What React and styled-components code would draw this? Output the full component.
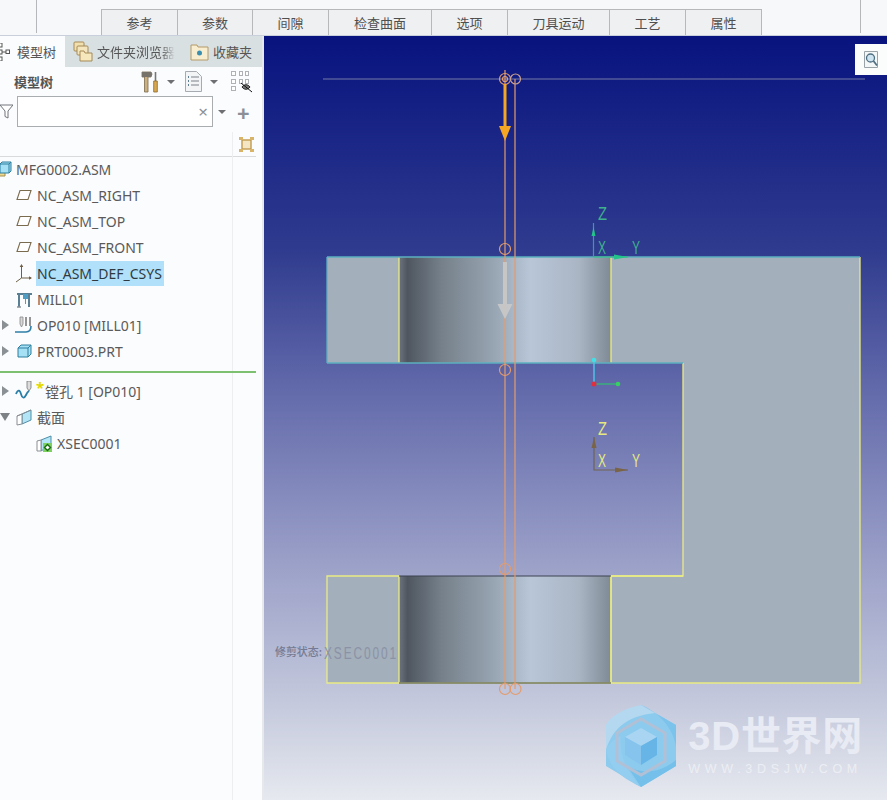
import styled, { createGlobalStyle } from 'styled-components';

const GlobalStyle = createGlobalStyle`
  html, body, #root {
    margin: 0;
    height: 100%;
  }
  body {
    overflow: hidden;
    background: #f7f8fa;
    font-family: "Noto Sans", "Noto Sans CJK SC", sans-serif;
  }
`;

const stepTabs = [
  { label: '参考', width: 77 },
  { label: '参数', width: 76 },
  { label: '间隙', width: 77 },
  { label: '检查曲面', width: 104 },
  { label: '选项', width: 77 },
  { label: '刀具运动', width: 103 },
  { label: '工艺', width: 77 },
  { label: '属性', width: 77 },
];

/* ---------- small drawn icons ---------- */

const TreeTabIcon = () => (
  <svg width="11" height="18" viewBox="0 0 11 18">
    <rect x="-3" y="0" width="5" height="4" fill="#fff" stroke="#555" />
    <rect x="-3" y="7" width="5" height="4" fill="#fff" stroke="#555" />
    <rect x="-3" y="14" width="5" height="4" fill="#fff" stroke="#555" />
    <rect x="6" y="7" width="3.5" height="3.5" fill="#fff" stroke="#555" />
    <path d="M2 9h4" stroke="#555" />
  </svg>
);

const FolderIcon = ({ stacked }) => (
  <svg width="21" height="21" viewBox="0 0 21 21">
    {stacked && <rect x="1" y="1" width="10" height="9" rx="1" fill="#f2dfae" stroke="#a58a58" />}
    {stacked && <rect x="4" y="5" width="11" height="9" rx="1" fill="#f5e5bc" stroke="#a58a58" />}
    <path d="M7 10h4l1 2h7v8H7z" fill={stacked ? '#f7e7bd' : 'none'} stroke={stacked ? '#a58a58' : 'none'} />
    {!stacked && <path d="M2 4h6l1 2h10v13H2z" fill="#f8edcf" stroke="#b49a68" />}
    {!stacked && <circle cx="10.5" cy="12" r="2.5" fill="#3a8fb0" />}
  </svg>
);

const ToolsIcon = () => (
  <svg width="18" height="22" viewBox="0 0 18 22">
    <path d="M1 1h9l1 2-1 3H7v15H3.5V6H1z" fill="#cdb07f" stroke="#7b6a4a" strokeWidth=".8" />
    <path d="M1 1h9l1 2-1 3H1z" fill="#77736a" />
    <path d="M14.5 1v9" stroke="#777" strokeWidth="1.6" />
    <path d="M12.7 10h3.6v11h-3.6z" fill="#d9a850" stroke="#8a6a30" strokeWidth=".8" />
  </svg>
);

const ListIcon = () => (
  <svg width="17" height="21" viewBox="0 0 17 21">
    <path d="M.5.5h11l5 5v15H.5z" fill="#f2f4f6" stroke="#a5abb0" />
    <path d="M6 6h8M6 10h8M6 14h8" stroke="#7c8288" />
    <path d="M3 6h1M3 10h1M3 14h1" stroke="#5f7f8f" strokeWidth="2" />
  </svg>
);

const ShowTreeIcon = () => (
  <svg width="22" height="22" viewBox="0 0 22 22">
    <g fill="#fff" stroke="#aeb2b6">
      <rect x=".5" y=".5" width="4" height="4" />
      <rect x=".5" y="8.5" width="4" height="4" />
      <rect x=".5" y="15.5" width="4" height="4" />
      <rect x="8.5" y=".5" width="3" height="4" />
      <rect x="14.5" y=".5" width="3" height="4" />
      <rect x="8.5" y="8.5" width="3" height="4" />
      <rect x="14.5" y="8.5" width="3" height="4" />
    </g>
    <path d="M11 16c2-3 6-3 8 0-2 3-6 3-8 0z" fill="#777" stroke="#222" />
    <path d="M10 12l11 9" stroke="#111" />
  </svg>
);

const FunnelIcon = () => (
  <svg width="13" height="15" viewBox="0 0 13 15">
    <path d="M0 1h13L8 7v7L5 12.5V7z" fill="#fff" stroke="#70757a" />
  </svg>
);

const FitIcon = () => (
  <svg width="15" height="15" viewBox="0 0 15 15">
    <rect x="3" y="3" width="9" height="9" fill="#f4e6c4" stroke="#c09a50" strokeWidth="1.4" />
    <g fill="#d9b468">
      <rect x="0" y="0" width="4" height="3" />
      <rect x="11" y="0" width="4" height="3" />
      <rect x="0" y="12" width="4" height="3" />
      <rect x="11" y="12" width="4" height="3" />
    </g>
  </svg>
);

const AssemblyIcon = () => (
  <svg width="18" height="16" viewBox="0 0 18 16">
    <path d="M2 9h9v6H2z" fill="#efd98e" stroke="#a58f50" />
    <path d="M6 3l2-2h9v9l-2 2H6z" fill="#a5e0f5" stroke="#2f7f9f" />
    <path d="M6 3h9v9M15 3l2-2" stroke="#2f7f9f" fill="none" />
  </svg>
);

const PlaneIcon = () => (
  <svg width="16" height="12" viewBox="0 0 16 12">
    <path d="M4 1.500h11L12 10.500H1z" fill="#fff" stroke="#7a6a4e" strokeWidth="1.100" />
  </svg>
);

const CsysIcon = () => (
  <svg width="18" height="20" viewBox="0 0 18 20">
    <path d="M6.500 2v13M6.500 15L16 15M6.500 15L1 19" stroke="#6e5f46" fill="none" />
    <path d="M4.700 4l1.800-3 1.800 3zM14 13.200l3 1.800-3 1.800z" fill="#6e5f46" />
  </svg>
);

const MillIcon = () => (
  <svg width="17" height="17" viewBox="0 0 17 17">
    <path d="M1 3h15M3 3v13M13 3v13" stroke="#5a7f95" strokeWidth="2" fill="none" />
    <path d="M7 3h5v5H10v5H9V8H7z" fill="#4f9cc4" />
    <path d="M1 16h4" stroke="#8a9097" strokeWidth="1.500" />
  </svg>
);

const OperationIcon = () => (
  <svg width="18" height="18" viewBox="0 0 18 18">
    <path d="M5 1h3v7L6.500 11 5 8z" fill="#d8d8d8" stroke="#888" strokeWidth=".8" />
    <path d="M11 1v9M15 1v9" stroke="#6a6a6a" strokeWidth="1.400" />
    <path d="M0 16h11c3 0 5-2 5-6" stroke="#2f7fa8" strokeWidth="1.600" fill="none" />
  </svg>
);

const PartIcon = () => (
  <svg width="15" height="14" viewBox="0 0 15 14">
    <path d="M1 4l3-3h10v9l-3 3H1z" fill="#a5e0f5" stroke="#2f7f9f" />
    <path d="M1 4h10v9M11 4l3-3" stroke="#2f7f9f" fill="none" />
  </svg>
);

const BoreIcon = () => (
  <svg width="19" height="20" viewBox="0 0 19 20">
    <path d="M12 0h4v7l-2 3-2-3z" fill="#dcdcdc" stroke="#777" strokeWidth=".8" />
    <path d="M1 13c2-5 4-4 5 0s3 5 5 1 2-3 3-4" stroke="#2a7fa8" strokeWidth="1.800" fill="none" />
  </svg>
);

const SectionIcon = () => (
  <svg width="17" height="17" viewBox="0 0 17 17">
    <path d="M6 5l9-4v10l-9 4z" fill="#b3e5f7" stroke="#4d8ea8" />
    <path d="M1 7l5-2v10l-5 1zM1 7l5-2 9-4" fill="#fff" stroke="#8a8f94" />
  </svg>
);

const SectionItemIcon = () => (
  <svg width="17" height="17" viewBox="0 0 17 17">
    <path d="M5 5l10-4v9l-10 6z" fill="#b3e5f7" stroke="#4d8ea8" />
    <path d="M1 6l4-1v11H1z" fill="#fff" stroke="#8a8f94" />
    <rect x="7" y="8" width="9" height="9" fill="#7ed060" />
    <path d="M11.500 9.500l3 3-3 3-3-3z" fill="#fff" stroke="#176c12" strokeWidth="1.400" />
  </svg>
);

const LogoMark = () => (
  <svg width="72" height="84" viewBox="0 0 72 84">
    <path d="M36 1l35 20v41L36 83 1 62V21z" fill="#8ccbee" />
    <path d="M36 1l35 20v22C68 24 55 9 36 1z" fill="#7cc3ec" />
    <path d="M36 1C16 5 4 14 1 21v25C8 24 22 12 50 9z" fill="#b4d8ef" />
    <path d="M1 46C5 66 18 74 36 83 22 68 14 52 16 32 8 36 3 40 1 46z" fill="#93cdf0" />
    <path d="M22 62c14 8 32 8 49-6v6L36 83z" fill="#74c0ea" />
    <path d="M36 15l24 14v28L36 71 12 57V29z" fill="none" stroke="#b2c0d6" strokeWidth="3" />
    <path d="M36 24l16 9-16 9-16-9z" fill="#a9d5f2" />
    <path d="M20 33l16 9v19l-16-10z" fill="#86c4ee" />
    <path d="M52 33l-16 9v19l16-10z" fill="#66b5e6" />
  </svg>
);

/* ---------- page ---------- */

const App = () => (
  <>
    <GlobalStyle />
    <Page>
      <TopBar>
        <TopRule />
        <StepTabs>
          {stepTabs.map((tab) => (
            <StepTab key={tab.label} $width={tab.width}>{tab.label}</StepTab>
          ))}
        </StepTabs>
        <TopRule />
      </TopBar>
      <Main>
        <Sidebar>
          <PanelTabs>
            <PanelTab $active $width={65}><TreeTabIcon />模型树</PanelTab>
            <PanelTab $width={116}><FolderIcon stacked /><TabText>文件夹浏览器</TabText></PanelTab>
            <PanelTab $width={81}><FolderIcon />收藏夹</PanelTab>
          </PanelTabs>
          <ToolRow>
            <ToolTitle>模型树</ToolTitle>
            <ToolButton><ToolsIcon /></ToolButton>
            <Caret $after={10} />
            <ToolButton><ListIcon /></ToolButton>
            <Caret $after={13} />
            <ToolButton><ShowTreeIcon /></ToolButton>
          </ToolRow>
          <FilterRow>
            <FunnelIcon />
            <SearchField>
              <ClearMark>×</ClearMark>
            </SearchField>
            <Caret />
            <PlusMark>+</PlusMark>
          </FilterRow>
          <TreeArea>
            <TreeHeader><FitIcon /></TreeHeader>
            <TreeRow $indent={-7}>
              <IconSlot><AssemblyIcon /></IconSlot>
              <RowLabel>MFG0002.ASM</RowLabel>
            </TreeRow>
            <TreeRow $indent={14}><IconSlot><PlaneIcon /></IconSlot><RowLabel>NC_ASM_RIGHT</RowLabel></TreeRow>
            <TreeRow $indent={14}><IconSlot><PlaneIcon /></IconSlot><RowLabel>NC_ASM_TOP</RowLabel></TreeRow>
            <TreeRow $indent={14}><IconSlot><PlaneIcon /></IconSlot><RowLabel>NC_ASM_FRONT</RowLabel></TreeRow>
            <TreeRow $indent={14}><IconSlot><CsysIcon /></IconSlot><RowLabel $selected>NC_ASM_DEF_CSYS</RowLabel></TreeRow>
            <TreeRow $indent={14}><IconSlot><MillIcon /></IconSlot><RowLabel>MILL01</RowLabel></TreeRow>
            <TreeRow $indent={14}>
              <Expander />
              <IconSlot><OperationIcon /></IconSlot>
              <RowLabel>OP010 [MILL01]</RowLabel>
            </TreeRow>
            <TreeRow $indent={14}>
              <Expander />
              <IconSlot><PartIcon /></IconSlot>
              <RowLabel>PRT0003.PRT</RowLabel>
            </TreeRow>
            <InsertLine />
            <TreeRow $indent={14}>
              <Expander />
              <IconSlot><BoreIcon /></IconSlot>
              <RegenMark>*</RegenMark>
              <RowLabel $tight>镗孔 1 [OP010]</RowLabel>
            </TreeRow>
            <TreeRow $indent={14}>
              <Expander $open />
              <IconSlot><SectionIcon /></IconSlot>
              <RowLabel>截面</RowLabel>
            </TreeRow>
            <TreeRow $indent={34}>
              <IconSlot><SectionItemIcon /></IconSlot>
              <RowLabel>XSEC0001</RowLabel>
            </TreeRow>
          </TreeArea>
        </Sidebar>
        <Viewport>
          <CadDrawing viewBox="264 36 623 764">
            <defs>
              <linearGradient id="bore" x1="399" x2="611" y1="0" y2="0" gradientUnits="userSpaceOnUse">
                <stop offset="0" stopColor="#6d747e" />
                <stop offset=".04" stopColor="#4f5660" />
                <stop offset=".2" stopColor="#75808a" />
                <stop offset=".45" stopColor="#98a5b2" />
                <stop offset=".62" stopColor="#b8c6d8" />
                <stop offset=".85" stopColor="#aab5c4" />
                <stop offset="1" stopColor="#7f8a96" />
              </linearGradient>
            </defs>

            {/* sectioned part */}
            <path d="M327 257H399V363H327Z" fill="#a3afbb" />
            <path d="M611 257H860V683H611V576H683V363H611Z" fill="#a3afbb" />
            <path d="M327 576H399V683H327Z" fill="#a3afbb" />
            <rect x="399" y="257" width="212" height="106" fill="url(#bore)" />
            <rect x="399" y="576" width="212" height="107" fill="url(#bore)" />

            <path d="M399 257V363M611 257V363M683 363V576H611V683H860V257" fill="none" stroke="#eaec84" strokeWidth="1.300" />
            <path d="M327 576H399V683H327ZM399 576V683M399 683H611V576" fill="none" stroke="#eaec84" strokeWidth="1.300" />
            <path d="M399 576H611M399 683H611" stroke="#3c4350" strokeWidth="1.200" />
            <path d="M327 257H860M327 363H683M327 257V363" fill="none" stroke="#5cb0c0" strokeWidth="1.300" />
            <path d="M611 576H683" stroke="#eaec84" strokeWidth="1.300" />

            {/* tool path */}
            <path d="M323 79H865" stroke="#8a8fae" strokeOpacity=".55" strokeWidth="1.500" />
            <g fill="none" stroke="#e39c6c" strokeWidth="1.200">
              <path d="M505 70V689M515 79V689" />
              <circle cx="505" cy="79" r="5.500" />
              <circle cx="505" cy="79" r="2.500" />
              <circle cx="515.500" cy="79" r="5" stroke="#c9a090" />
              <circle cx="505" cy="249" r="5.500" />
              <circle cx="505" cy="370" r="5.500" />
              <circle cx="505" cy="569" r="5.500" />
              <circle cx="505" cy="689" r="5.500" />
              <circle cx="515.500" cy="689" r="5.500" />
            </g>
            <path d="M503.500 84H506.500V126H511L505 141 499 126H503.500Z" fill="#f5a623" />
            <path d="M503 262H507V304H512.500L505 319 497.500 304H503Z" fill="#c9c9c9" fillOpacity=".9" />

            {/* datum csys */}
            <path d="M593.500 223V257" stroke="#34a090" strokeWidth="1.200" />
            <path d="M593.500 227l-2 9h4z" fill="#23c48a" />
            <path d="M593.500 257H628" stroke="#34c080" strokeWidth="1.200" />
            <path d="M614 254.500l14 2.500-14 2.500z" fill="#23c48a" />
            <AxisLabel x="598" y="220" textLength="9" lengthAdjust="spacingAndGlyphs" fill="#3fb08c">Z</AxisLabel>
            <AxisLabel x="598" y="254" textLength="8" lengthAdjust="spacingAndGlyphs" fill="#3fb08c">X</AxisLabel>
            <AxisLabel x="632" y="254" textLength="8" lengthAdjust="spacingAndGlyphs" fill="#3fb08c">Y</AxisLabel>

            {/* tool triad */}
            <path d="M594 361V384" stroke="#4fc3e6" strokeWidth="1.500" />
            <path d="M594 384H618" stroke="#30c070" strokeWidth="1.200" />
            <circle cx="594" cy="360" r="2.300" fill="#43dfe6" />
            <circle cx="594" cy="384" r="2.500" fill="#e03040" />
            <circle cx="618" cy="384" r="2.300" fill="#36d060" />

            {/* lower csys */}
            <path d="M594 437V470H628" fill="none" stroke="#6e6450" strokeWidth="1.200" />
            <path d="M594 437l-2.500 11h5z" fill="#7a6448" />
            <path d="M615 467.500l13 2.500-13 2.500z" fill="#7a6448" />
            <AxisLabel x="598" y="435" textLength="9" lengthAdjust="spacingAndGlyphs" fill="#e8e880">Z</AxisLabel>
            <AxisLabel x="598" y="467" textLength="8" lengthAdjust="spacingAndGlyphs" fill="#e8e880">X</AxisLabel>
            <AxisLabel x="632" y="467" textLength="8" lengthAdjust="spacingAndGlyphs" fill="#e8e880">Y</AxisLabel>

            <ClipState x="275" y="656" textLength="47" lengthAdjust="spacingAndGlyphs">修剪状态:</ClipState>
            <ClipName x="324" y="659" textLength="74" lengthAdjust="spacingAndGlyphs">XSEC0001</ClipName>
          </CadDrawing>

          <ZoomButton>
            <svg width="14" height="17" viewBox="0 0 14 17">
              <path d="M.5.5h13v16H.5z" fill="#f4f7f8" stroke="#9aa4a8" />
              <circle cx="6.500" cy="7" r="4" fill="#cfe6f2" stroke="#4f6f80" strokeWidth="1.300" />
              <path d="M9.500 10l3.500 4.500" stroke="#4f6f80" strokeWidth="1.800" />
            </svg>
          </ZoomButton>

          <Watermark>
            <LogoMark />
            <WatermarkText>
              <WatermarkName>3D世界网</WatermarkName>
              <WatermarkUrl>WWW.3DSJW.COM</WatermarkUrl>
            </WatermarkText>
          </Watermark>
        </Viewport>
      </Main>
    </Page>
  </>
);

/* Styles */
const Page = styled.div`
  display: flex;
  flex-direction: column;
  height: 800px;
  width: 887px;
  overflow: hidden;
`;

const TopBar = styled.header`
  display: flex;
  height: 36px;
  padding-left: 36px;
  background: #f7f8fa;
  border-bottom: 1px solid #c9cfdb;
  box-sizing: border-box;
`;

const TopRule = styled.div`
  width: 1px;
  height: 33px;
  background: #b5b7ba;
`;

const StepTabs = styled.nav`
  display: flex;
  align-self: flex-end;
  margin-left: 64px;
  margin-right: 99px;
`;

const StepTab = styled.div`
  display: flex;
  align-items: center;
  justify-content: center;
  width: ${(p) => p.$width}px;
  height: 26px;
  box-sizing: border-box;
  background: #eff0f1;
  border: 1px solid #b6b8ba;
  border-bottom: none;
  margin-right: -1px;
  font-size: 13px;
  color: #4f4f4f;
`;

const Main = styled.div`
  display: flex;
  flex: 1;
  min-height: 0;
`;

const Sidebar = styled.aside`
  display: flex;
  flex-direction: column;
  width: 264px;
  flex-shrink: 0;
  box-sizing: border-box;
  overflow: hidden;
  background: #fbfcfd;
  border-right: 2px solid #e6e8ec;
`;

const PanelTabs = styled.div`
  display: flex;
  height: 31px;
  flex-shrink: 0;
  background: #d9e0e1;
`;

const PanelTab = styled.div`
  display: flex;
  align-items: center;
  gap: ${(p) => (p.$active ? 6 : 3)}px;
  width: ${(p) => p.$width}px;
  flex-shrink: 0;
  box-sizing: border-box;
  padding-left: ${(p) => (p.$active ? 0 : 8)}px;
  background: ${(p) => (p.$active ? '#fbfcfd' : 'transparent')};
  font-size: 13px;
  color: #555;
  white-space: nowrap;
`;

const TabText = styled.span`
  flex-shrink: 0;
  /* the long tab title fades out at its end */
  mask-image: linear-gradient(90deg, #000 82%, transparent 100%);
`;

const ToolRow = styled.div`
  display: flex;
  align-items: center;
  height: 29px;
  flex-shrink: 0;
  padding-left: 14px;
`;

const ToolTitle = styled.div`
  width: 127px;
  font-size: 13px;
  font-weight: 700;
  color: #555;
`;

const ToolButton = styled.div`
  display: flex;
`;

const Caret = styled.span`
  width: 0;
  height: 0;
  margin-left: 8px;
  margin-right: ${(p) => p.$after || 0}px;
  border-left: 4px solid transparent;
  border-right: 4px solid transparent;
  border-top: 4px solid #6d6f72;
`;

const FilterRow = styled.div`
  display: flex;
  align-items: center;
  gap: 4px;
  height: 31px;
  flex-shrink: 0;

  ${Caret} {
    margin-left: 1px;
  }
`;

const SearchField = styled.div`
  display: flex;
  align-items: center;
  justify-content: flex-end;
  width: 196px;
  height: 31px;
  box-sizing: border-box;
  padding-right: 4px;
  background: #fff;
  border: 1px solid #a9adb0;
`;

const ClearMark = styled.span`
  font-size: 17px;
  line-height: 1;
  color: #8e9195;
`;

const PlusMark = styled.span`
  margin-left: 7px;
  font-size: 22px;
  font-weight: 700;
  line-height: 1;
  color: #8a9096;
`;

const TreeArea = styled.div`
  position: relative;
  flex: 1;
  width: 256px;
  margin-top: 5px;

  /* column rule of the settings column */
  &::before {
    content: '';
    position: absolute;
    top: 0;
    bottom: 0;
    left: 232px;
    width: 1px;
    background: #eceef0;
  }
`;

const TreeHeader = styled.div`
  display: flex;
  align-items: center;
  justify-content: flex-end;
  height: 25px;
  box-sizing: border-box;
  padding-right: 2px;
  border-bottom: 1px solid #d8dadd;
`;

const TreeRow = styled.div`
  position: relative;
  display: flex;
  align-items: center;
  height: 26px;
  box-sizing: border-box;
  padding-bottom: 2px;
  margin-left: ${(p) => p.$indent}px;
`;

const IconSlot = styled.span`
  display: flex;
  align-items: center;
  justify-content: center;
  width: 20px;
  flex-shrink: 0;
  margin-right: 2px;
`;

const Expander = styled.span`
  position: absolute;
  left: ${(p) => (p.$open ? -14 : -12)}px;
  width: 0;
  height: 0;
  ${(p) =>
    p.$open
      ? `border-left: 5px solid transparent;
         border-right: 5px solid transparent;
         border-top: 8px solid #7c8286;`
      : `border-top: 5px solid transparent;
         border-bottom: 5px solid transparent;
         border-left: 7px solid #8b9094;`}
`;

const RegenMark = styled.span`
  position: absolute;
  left: 22px;
  top: 1px;
  font-size: 15px;
  font-weight: 700;
  line-height: 1;
  color: #e2d800;
`;

const RowLabel = styled.span`
  display: flex;
  align-items: center;
  height: 25px;
  padding: 0 2px 0 1px;
  margin-left: ${(p) => (p.$tight ? 8 : 0)}px;
  background: ${(p) => (p.$selected ? '#b0e0fa' : 'transparent')};
  font-size: 14px;
  color: ${(p) => (p.$selected ? '#2f3a40' : '#5a5a5a')};
  white-space: nowrap;
`;

const InsertLine = styled.div`
  position: relative;
  height: 2px;
  margin: 6px 0;
  background: #7cc070;
`;

const Viewport = styled.main`
  position: relative;
  flex: 1;
  min-width: 0;
  background: linear-gradient(
    180deg,
    #08137f 0%,
    #2f3b8e 28%,
    #5f67a9 45%,
    #9ba0c8 69%,
    #c3c8dc 87%,
    #e6e9ef 100%
  );
`;

const CadDrawing = styled.svg`
  display: block;
  width: 100%;
  height: 100%;
`;

const AxisLabel = styled.text`
  font-family: "Liberation Sans", sans-serif;
  font-size: 18px;
`;

const ClipState = styled.text`
  font-family: "Noto Sans CJK SC", sans-serif;
  font-size: 11px;
  font-weight: 500;
  fill: #757a92;
`;

const ClipName = styled.text`
  font-family: "Liberation Sans", sans-serif;
  font-size: 16px;
  letter-spacing: 2.500px;
  fill: #8b92a6;
`;

const ZoomButton = styled.div`
  position: absolute;
  top: 8px;
  right: 0;
  display: flex;
  align-items: center;
  justify-content: center;
  width: 32px;
  height: 31px;
  background: #fbfcfc;
`;

const Watermark = styled.div`
  position: absolute;
  right: 24px;
  bottom: 12px;
  display: flex;
  align-items: center;
  gap: 11px;
`;

const WatermarkText = styled.div`
  display: flex;
  flex-direction: column;
  gap: 6px;
`;

const WatermarkName = styled.div`
  font-family: "Liberation Sans", "Noto Sans CJK SC", sans-serif;
  font-size: 40px;
  font-weight: 700;
  line-height: 40px;
  letter-spacing: .7px;
  color: #e8ebf3;
`;

const WatermarkUrl = styled.div`
  font-family: "Liberation Sans", sans-serif;
  font-size: 12.5px;
  line-height: 14px;
  letter-spacing: 4.700px;
  color: #eceef4;
`;

export default App;
